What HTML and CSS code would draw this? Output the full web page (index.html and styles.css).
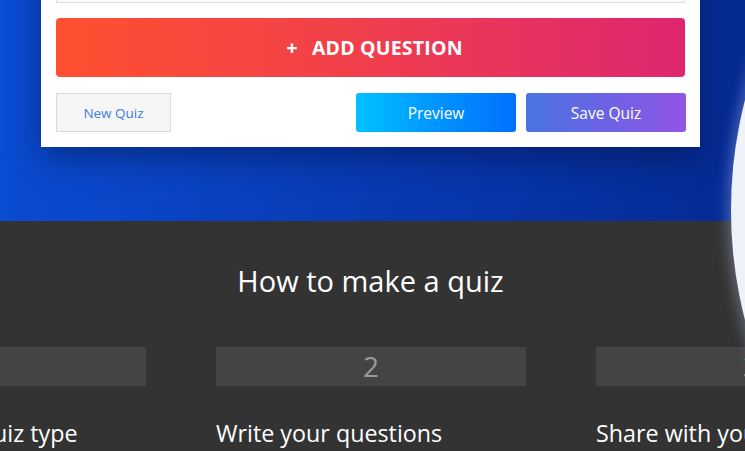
FILE: index.html
```html
<!DOCTYPE html>
<html lang="en">
<head>
<meta charset="utf-8">
<title>Quiz Maker</title>
<link rel="stylesheet" href="styles.css">
</head>
<body>
<div class="page">
  <section class="hero">
    <div class="card">
      <div class="field"></div>
      <button class="add-btn"><span class="plus">+</span>ADD QUESTION</button>
      <div class="actions">
        <button class="btn btn-new">New Quiz</button>
        <div class="actions-right">
          <button class="btn btn-preview">Preview</button>
          <button class="btn btn-save">Save Quiz</button>
        </div>
      </div>
    </div>
  </section>
  <section class="how">
    <h2 class="how-title">How to make a quiz</h2>
    <div class="steps">
      <div class="step">
        <div class="step-num">1</div>
        <div class="step-title">Choose your quiz type</div>
      </div>
      <div class="step">
        <div class="step-num">2</div>
        <div class="step-title">Write your questions</div>
      </div>
      <div class="step">
        <div class="step-num">3</div>
        <div class="step-title">Share with your friends</div>
      </div>
    </div>
  </section>
  <div class="phone"></div>
</div>
</body>
</html>
```

FILE: styles.css
```css
* { box-sizing: border-box; }
html, body { margin: 0; padding: 0; }
body {
  width: 745px;
  height: 451px;
  overflow: hidden;
  font-family: "Open Sans", "Noto Sans", sans-serif;
  background: #333333;
}
.page {
  position: relative;
  width: 745px;
  height: 451px;
  overflow: hidden;
}
.hero {
  display: flow-root;
  background: linear-gradient(90deg, #0a4cd2 0%, #0838b0 55%, #052a92 100%);
  padding: 0 45px 0 41px;
  height: 221px;
}
.card {
  width: 659px;
  margin-top: -52px;
  background: #ffffff;
  padding: 15px;
  box-shadow: 0 12px 30px rgba(0, 10, 50, 0.4);
}
.field {
  height: 40px;
  border: 1px solid #dddddd;
  background: #fafafa;
}
.add-btn {
  display: flex;
  align-items: center;
  justify-content: center;
  width: 100%;
  height: 59px;
  margin-top: 15px;
  padding-left: 14px;
  border: none;
  border-radius: 4px;
  background: linear-gradient(90deg, #ff5030 0%, #f2404a 45%, #dd2670 100%);
  color: #ffffff;
  font-family: inherit;
  font-weight: 700;
  font-size: 19.5px;
  letter-spacing: 0.2px;
}
.plus { margin-right: 14px; font-size: 20px; }
.actions {
  display: flex;
  justify-content: space-between;
  margin-top: 16px;
  margin-right: -1px;
}
.actions-right { display: flex; gap: 10px; }
.btn {
  height: 39px;
  border-radius: 3px;
  font-family: inherit;
  font-size: 15.5px;
  border: none;
  color: #ffffff;
}
.btn-new {
  width: 115px;
  background: #f6f6f6;
  border: 1px solid #d9d9d9;
  border-radius: 0;
  color: #3a7fd8;
  font-size: 13.5px;
}
.btn-preview {
  width: 160px;
  background: linear-gradient(90deg, #00c2ff 0%, #0090ff 55%, #0070ff 100%);
}
.btn-save {
  width: 160px;
  background: linear-gradient(90deg, #4a74e2 0%, #6c63e4 50%, #9255e6 100%);
}
.how {
  padding-top: 40px;
  color: #ffffff;
}
.how-title {
  margin: 0;
  padding-right: 4px;
  text-align: center;
  font-weight: 400;
  font-size: 29px;
  line-height: 40px;
}
.steps {
  display: grid;
  grid-template-columns: 310px 310px 310px;
  column-gap: 70px;
  margin-left: -164px;
  margin-top: 46px;
}
.step-num {
  height: 39px;
  background: #444444;
  color: #9a9a9a;
  text-align: center;
  font-size: 28px;
  line-height: 39px;
}
.step-title {
  margin-top: 32px;
  font-size: 23.3px;
  line-height: 30px;
  white-space: nowrap;
}
.phone {
  position: absolute;
  left: 731px;
  top: -230px;
  width: 880px;
  height: 880px;
  border-radius: 50%;
  background: #eff2fa;
  box-shadow: 0 0 14px 3px rgba(200, 215, 255, 0.35);
}
```
